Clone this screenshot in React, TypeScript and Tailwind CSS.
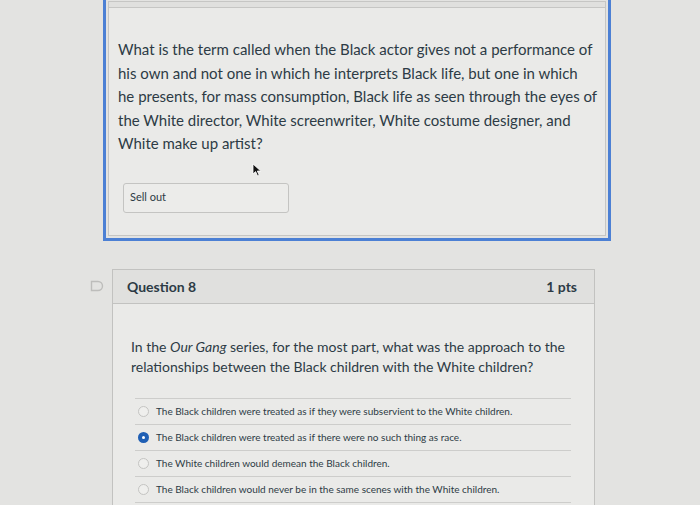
import React from "react";

const options = [
  { text: "The Black children were treated as if they were subservient to the White children.", selected: false },
  { text: "The Black children were treated as if there were no such thing as race.", selected: true },
  { text: "The White children would demean the Black children.", selected: false },
  { text: "The Black children would never be in the same scenes with the White children.", selected: false },
];

function Radio({ selected }: { selected: boolean }) {
  if (selected) {
    return (
      <span className="flex h-[11px] w-[11px] shrink-0 items-center justify-center rounded-full bg-[#1f5fb4]">
        <span className="h-[3px] w-[3px] rounded-full bg-white" />
      </span>
    );
  }
  return <span className="h-[11px] w-[11px] shrink-0 rounded-full border border-[#c4c4c2] bg-[#efefed]" />;
}

function Cursor() {
  return (
    <svg className="absolute left-[252px] top-[163px]" width="10" height="14" viewBox="0 0 10 14">
      <path d="M1 1 L1 11 L3.6 8.6 L5.6 13 L7.2 12.3 L5.3 8 L8.8 8 Z" fill="#111" stroke="#fff" strokeWidth="0.8" />
    </svg>
  );
}

export default function App() {
  return (
    <div className="relative h-[505px] w-[700px] overflow-hidden bg-[#e3e3e1] font-['Lato','Open_Sans',sans-serif] text-[#2d3b45]">
      {/* Previous question, focused */}
      <div className="ml-[103px] mt-[-4px] w-[508px] border-[3px] border-[#4c80d4] p-[2px]">
        <div className="border border-[#c6c6c4] bg-[#eaeae8]">
          <div className="h-[6px] border-b border-[#c6c6c4] bg-[#e0e0de]" />
          <div className="px-[9px] pb-[22px] pt-[30px]">
            <p className="whitespace-nowrap text-[15px] leading-[23.5px]">
              What is the term called when the Black actor gives not a performance of
              <br />
              his own and not one in which he interprets Black life, but one in which
              <br />
              he presents, for mass consumption, Black life as seen through the eyes of
              <br />
              the White director, White screenwriter, White costume designer, and
              <br />
              White make up artist?
            </p>
            <div className="ml-[5px] mt-[27px] flex h-[30px] w-[166px] items-center rounded-[3px] border border-[#c4c4c2] bg-[#ececea] px-[6px] text-[11px]">
              Sell out
            </div>
          </div>
        </div>
      </div>
      <Cursor />

      {/* Question 8 */}
      <div className="mt-[28px] flex">
        <div className="ml-[90px] mt-[11px] w-[22px]">
          <svg width="14" height="12" viewBox="0 0 14 12">
            <path d="M1.5 1.5 H8 A4.5 4.5 0 0 1 8 10.5 H1.5 Z" fill="none" stroke="#bdbdbb" strokeWidth="1.4" />
          </svg>
        </div>
        <div className="w-[483px] border border-[#c2c2c0]">
          <div className="flex h-[34px] items-center justify-between border-b border-[#c2c2c0] bg-[#e0e0de] pl-[14px] pr-[17px] text-[14px] font-bold">
            <span>Question 8</span>
            <span>1 pts</span>
          </div>
          <div className="h-[220px] bg-[#eaeae8] pl-[18px] pr-[20px] pt-[33px]">
            <p className="whitespace-nowrap text-[14px] leading-[20px]">
              In the <em>Our Gang</em> series, for the most part, what was the approach to the
              <br />
              relationships between the Black children with the White children?
            </p>
            <div className="ml-[4px] mt-[21px] w-[436px] border-t border-[#cdcdcb]">
              {options.map((o) => (
                <div key={o.text} className="flex h-[26px] items-center gap-[7px] border-b border-[#cdcdcb] pl-[3px] text-[10px]">
                  <Radio selected={o.selected} />
                  <span>{o.text}</span>
                </div>
              ))}
            </div>
          </div>
        </div>
      </div>
    </div>
  );
}
